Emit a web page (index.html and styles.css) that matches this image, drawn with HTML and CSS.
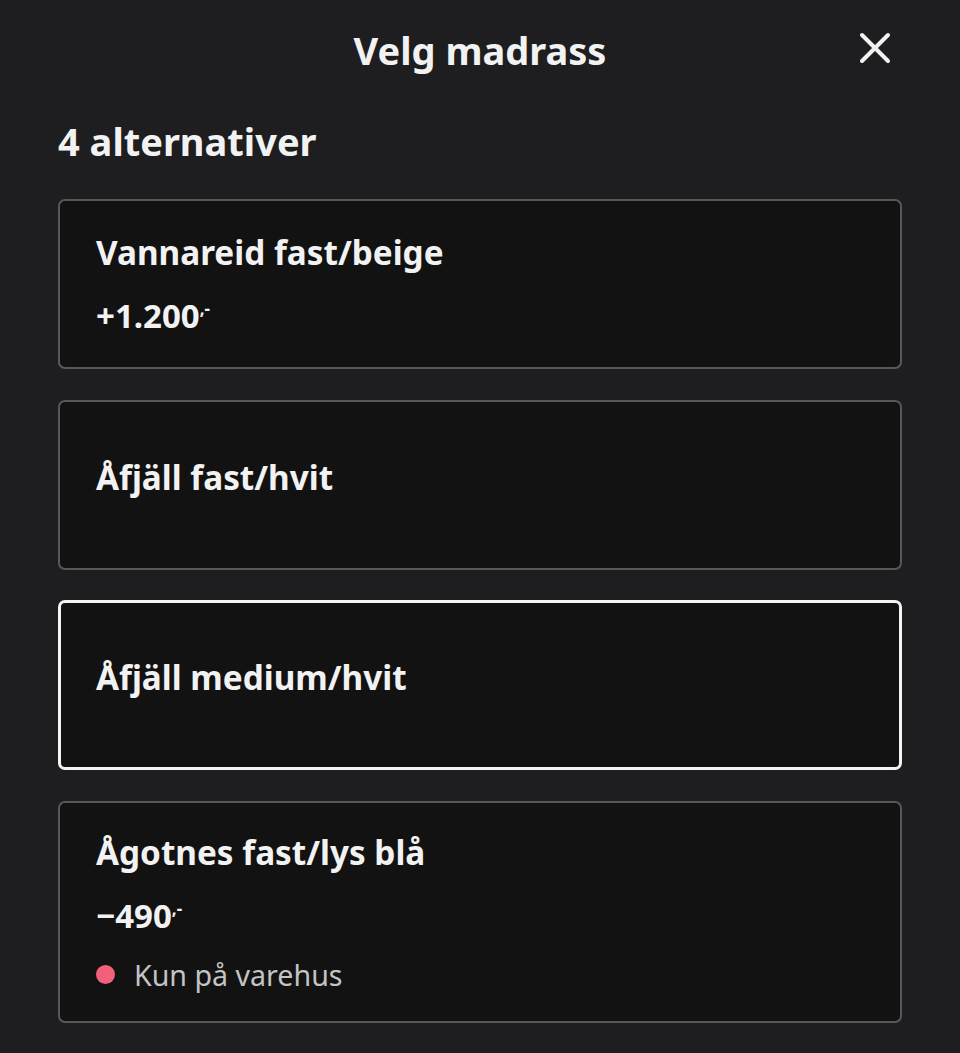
FILE: index.html
```html
<!DOCTYPE html>
<html lang="no">

<head>
  <meta charset="UTF-8">
  <meta name="viewport" content="width=device-width, initial-scale=1.0">
  <title>Velg madrass</title>
  <link rel="stylesheet" href="styles.css">
</head>

<body>
  <div class="sheet">
    <div class="sheet-header">
      <h1>Velg madrass</h1>
      <button class="close-button" aria-label="Lukk">
        <svg width="34" height="34" viewBox="0 0 34 34">
          <path d="M4 4 L30 30 M30 4 L4 30" stroke="#f2f2f2" stroke-width="4" stroke-linecap="round" fill="none"/>
        </svg>
      </button>
    </div>

    <h2 class="count">4 alternativer</h2>

    <div class="options">
      <div class="option">
        <div class="option-name">Vannareid fast/beige</div>
        <div class="option-price">+1.200<span class="dash">,-</span></div>
      </div>

      <div class="option no-price">
        <div class="option-name">Åfjäll fast/hvit</div>
      </div>

      <div class="option no-price selected">
        <div class="option-name">Åfjäll medium/hvit</div>
      </div>

      <div class="option">
        <div class="option-name">Ågotnes fast/lys blå</div>
        <div class="option-price">&minus;490<span class="dash">,-</span></div>
        <div class="stock"><span class="dot"></span>Kun på varehus</div>
      </div>
    </div>
  </div>
</body>

</html>
```

FILE: styles.css
```css
body {
  font-family: "Noto Sans", "Open Sans", sans-serif;
  margin: 0;
  padding: 0;
  background-color: #1e1e20;
  color: #f2f2f2;
}

.sheet {
  padding: 0 58px;
}

.sheet-header {
  position: relative;
  height: 100px;
  display: flex;
  align-items: center;
  justify-content: center;
}

h1 {
  margin: 0;
  font-size: 38px;
  font-weight: 700;
}

.close-button {
  position: absolute;
  right: 10px;
  top: 31px;
  padding: 0;
  border: none;
  background: none;
  cursor: pointer;
  display: flex;
}

.count {
  margin: 17px 0 34px;
  font-size: 38px;
  font-weight: 700;
  line-height: 48px;
}

.options {
  display: flex;
  flex-direction: column;
  gap: 30.5px;
}

.option {
  min-height: 170px;
  box-sizing: border-box;
  padding: 26px 36px;
  display: flex;
  flex-direction: column;
  justify-content: center;
  background-color: #121212;
  border: 2px solid #58585a;
  border-radius: 7px;
}

.option.no-price {
  padding-bottom: 42px;
}

.option.selected {
  border: 3px solid #f4f4f4;
  padding: 25px 35px 41px;
}

.option-name {
  font-size: 33.3px;
  font-weight: 700;
  line-height: 46px;
}

.option-price {
  margin-top: 11px;
  font-size: 33px;
  font-weight: 700;
  line-height: 46px;
}

.dash {
  font-size: 17px;
  vertical-align: 13px;
}

.stock {
  margin-top: 16px;
  display: flex;
  align-items: center;
  font-size: 28.6px;
  line-height: 40px;
  color: #c4c4c4;
}

.dot {
  width: 19px;
  height: 19px;
  margin: 0 19px 0 0;
  border-radius: 50%;
  background-color: #f1627a;
}
```
